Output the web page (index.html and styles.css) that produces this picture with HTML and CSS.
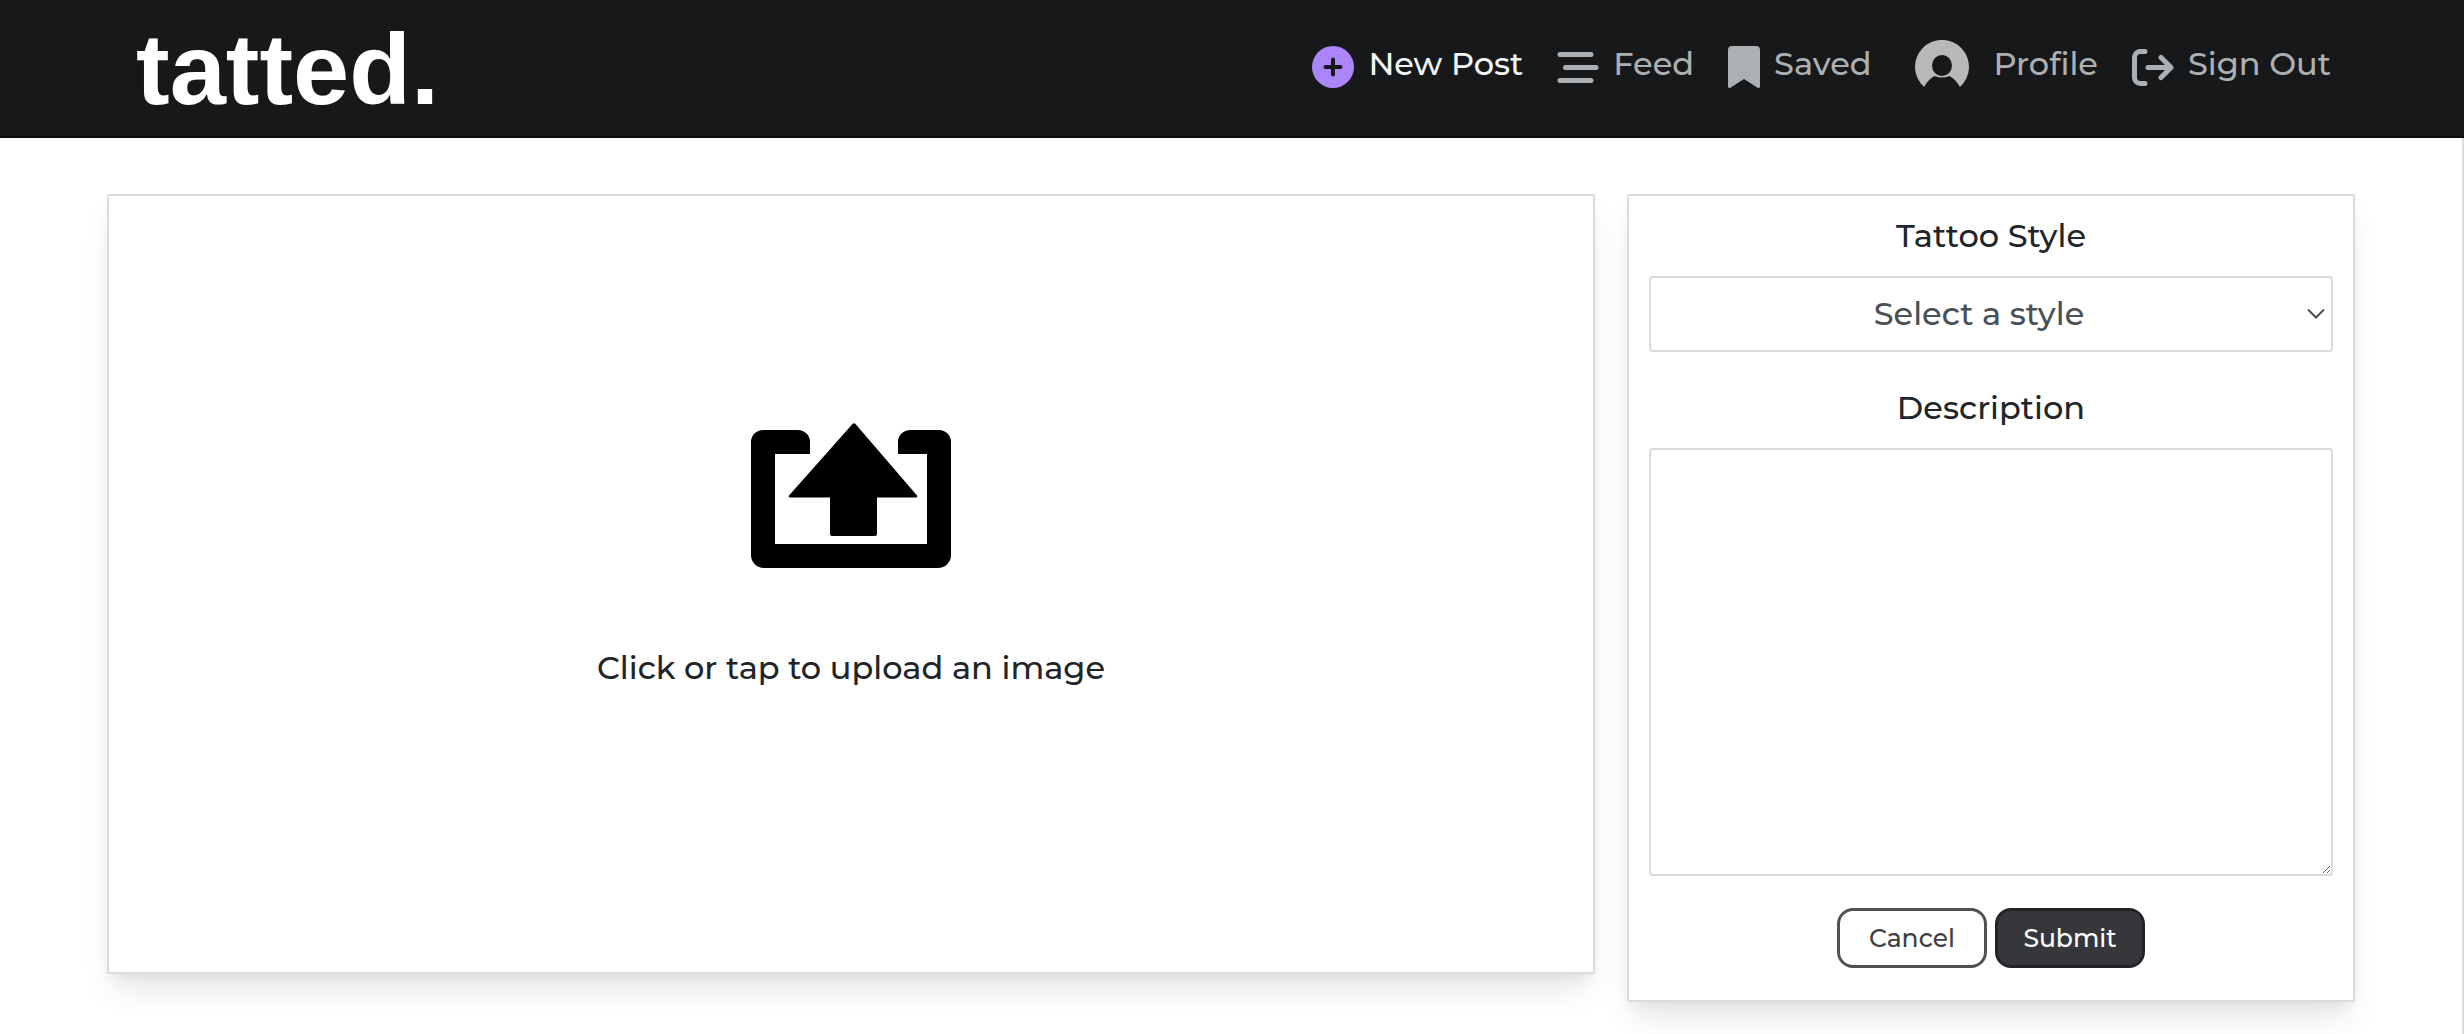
FILE: index.html
```html
<!DOCTYPE html>
<html lang="en">
<head>
  <meta charset="utf-8">
  <meta name="viewport" content="width=device-width, initial-scale=1">
  <title>tatted. – New Post</title>
  <link rel="stylesheet" href="styles.css">
</head>
<body>
  <header class="site-header">
    <div class="header-inner">
      <a class="logo" href="#">tatted.</a>
      <nav class="nav" aria-label="Main">
        <a class="nav-link active" href="#">
          <svg class="icon" viewBox="0 0 42 42" aria-hidden="true">
            <circle cx="21" cy="21" r="21" fill="#ad85fa"/>
            <path d="M21 13.500v15M13.500 21h15" stroke="#17181a" stroke-width="4" stroke-linecap="round"/>
          </svg>
          <span>New Post</span>
        </a>
        <a class="nav-link" href="#">
          <svg class="icon" viewBox="0 0 42 42" aria-hidden="true">
            <path d="M3 8.500h31M8.500 21.500h30.500M3 34.500h31" stroke="#adb0b3" stroke-width="5" stroke-linecap="round"/>
          </svg>
          <span>Feed</span>
        </a>
        <a class="nav-link" href="#">
          <svg class="icon icon-narrow" viewBox="0 0 32 42" aria-hidden="true">
            <path d="M4 0h24a4 4 0 0 1 4 4v36.500a1.500 1.500 0 0 1-2.400 1.200L16 33 2.400 41.700A1.500 1.500 0 0 1 0 40.500V4a4 4 0 0 1 4-4z" fill="#adb0b3"/>
          </svg>
          <span>Saved</span>
        </a>
        <a class="nav-link" href="#">
          <svg class="icon icon-wide" viewBox="2 0 74 48" aria-hidden="true">
            <path fill-rule="evenodd" fill="#b8b8b8" d="M20 47A27 27 0 1 1 56 47C53 42 50 38.500 45.500 36Q38 39 30.500 36C26 38.500 23 42 20 47zM28 25.500a10 10.500 0 1 0 20 0a10 10.500 0 1 0-20 0z"/>
          </svg>
          <span>Profile</span>
        </a>
        <a class="nav-link" href="#">
          <svg class="icon" viewBox="0 0 42 42" aria-hidden="true">
            <g fill="none" stroke="#adb0b3" stroke-width="5" stroke-linecap="round" stroke-linejoin="round">
              <path d="M13 5.500H8.500a6 6 0 0 0-6 6v20a6 6 0 0 0 6 6H13"/>
              <path d="M16 21.500h23M29 11.500l10 10-10 10"/>
            </g>
          </svg>
          <span>Sign Out</span>
        </a>
      </nav>
    </div>
  </header>

  <main class="page">
    <form class="post-form">
      <button class="card upload" type="button">
        <svg class="upload-icon" viewBox="0 0 200 145" aria-hidden="true">
          <path d="M12 7H47a12 12 0 0 1 12 12V31H24V121H176V31H147V19a12 12 0 0 1 12-12h29a12 12 0 0 1 12 12V132a13 13 0 0 1-13 13H13a13 13 0 0 1-13-13V19A12 12 0 0 1 12 7z"/>
          <path d="M101.500 1a2 2 0 0 1 3 0L166 72.500q1 2-1 2H126V111q0 2-2 2H81q-2 0-2-2V74.500H39q-2 0-1-2z"/>
        </svg>
        <span>Click or tap to upload an image</span>
      </button>

      <section class="card details">
        <label class="label" for="style">Tattoo Style</label>
        <div class="select-wrap">
          <select class="field select" id="style">
            <option>Select a style</option>
            <option>Traditional</option>
            <option>Realism</option>
            <option>Blackwork</option>
          </select>
          <svg class="chevron" viewBox="0 0 18 12" aria-hidden="true">
            <path d="M1 1.500l8 8 8-8" fill="none" stroke="#495057" stroke-width="2"/>
          </svg>
        </div>
        <label class="label" for="description">Description</label>
        <textarea class="field description" id="description"></textarea>
        <div class="actions">
          <button class="btn btn-outline" type="reset">Cancel</button>
          <button class="btn btn-dark" type="submit">Submit</button>
        </div>
      </section>
    </form>
  </main>
</body>
</html>
```
FILE: styles.css
```css
* {
  box-sizing: border-box;
}

body {
  display: flex;
  flex-direction: column;
  min-height: 100vh;
  margin: 0;
  background: #fff;
  color: #212529;
  font-family: Montserrat, Inter, sans-serif;
  font-size: 32px;
  font-weight: 500;
  line-height: 48px;
}

button,
select,
textarea {
  color: inherit;
  font: inherit;
}

.site-header {
  background: #17181a;
  border-bottom: 2px solid #0d0a12;
}

.header-inner {
  display: flex;
  align-items: center;
  justify-content: space-between;
  max-width: 2280px;
  min-height: 136px;
  margin: 0 auto;
  padding: 0 41px 0 44px;
}

.logo {
  padding-top: 2px;
  color: #fff;
  font-family: "Liberation Sans", Arial, sans-serif;
  font-size: 101px;
  font-weight: 700;
  line-height: 104px;
  text-decoration: none;
}

.nav {
  display: flex;
  gap: 34px;
  margin-bottom: 8px;
}

.nav-link {
  display: flex;
  align-items: flex-end;
  gap: 14px;
  color: #adb0b3;
  text-decoration: none;
}

.nav-link.active {
  color: #f1f5f5;
}

.icon {
  width: 42px;
  height: 42px;
}

.icon-narrow {
  width: 32px;
}

.icon-wide {
  width: 74px;
  height: 48px;
}

.page {
  flex: 1;
  padding: 56px 0 32px;
  border-right: 2px solid #dadae0;
}

.post-form {
  display: grid;
  grid-template-columns: repeat(12, minmax(0, 1fr));
  align-items: start;
  gap: 32px;
  max-width: 2280px;
  margin: 0 auto;
  padding: 0 16px;
}

.card {
  background: #fff;
  border: 2px solid #dadae0;
  border-radius: 2px;
  box-shadow: 0 20px 30px -6px rgba(0, 0, 0, 0.1), 0 8px 12px -4px rgba(0, 0, 0, 0.05);
}

.upload {
  display: flex;
  grid-column: span 8;
  flex-direction: column;
  align-items: center;
  justify-content: center;
  gap: 76px;
  min-height: 780px;
  padding: 0 0 54px;
  cursor: pointer;
}

.upload-icon {
  width: 200px;
  height: 145px;
}

.details {
  display: flex;
  grid-column: span 4;
  flex-direction: column;
  padding: 16px 20px 32px;
}

.label {
  margin-bottom: 16px;
  text-align: center;
}

.field {
  display: block;
  width: 100%;
  background: #fff;
  border: 2px solid #dadae0;
  border-radius: 4px;
}

.select-wrap {
  position: relative;
  margin-bottom: 32px;
}

.select {
  height: 76px;
  padding: 0 24px 0 0;
  appearance: none;
  color: #495057;
  text-align: center;
  text-align-last: center;
}

.chevron {
  position: absolute;
  top: 32px;
  right: 8px;
  width: 18px;
  height: 12px;
  pointer-events: none;
}

.description {
  height: 428px;
  margin-bottom: 32px;
  padding: 12px 24px;
  resize: vertical;
}

.actions {
  display: flex;
  justify-content: center;
  gap: 8px;
}

.btn {
  width: 150px;
  height: 60px;
  padding: 0;
  border: 3px solid #505154;
  border-radius: 16px;
  font-size: 25px;
  line-height: 32px;
}

.btn-outline {
  background: #fff;
  color: #3f4043;
}

.btn-dark {
  background: #36373a;
  border-color: #232427;
  color: #fff;
}
```
